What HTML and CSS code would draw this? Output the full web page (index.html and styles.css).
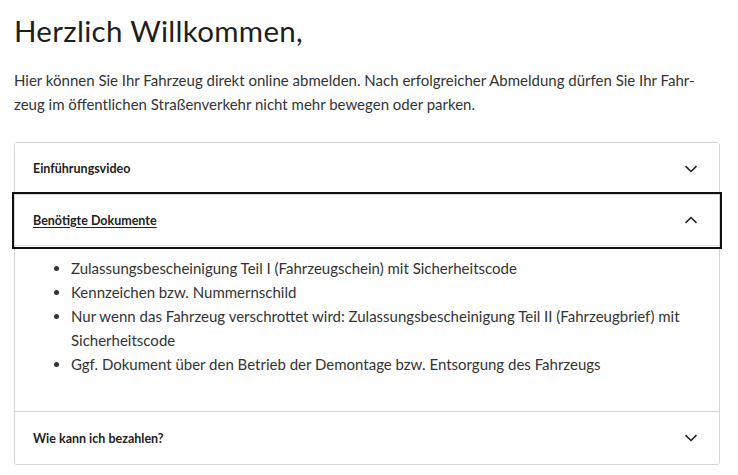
FILE: index.html
```html
<!DOCTYPE html>
<html lang="de">
<head>
<meta charset="utf-8">
<link rel="stylesheet" href="styles.css">
</head>
<body>
<main class="page">
  <h1 class="title">Herzlich Willkommen,</h1>
  <p class="intro">Hier können Sie Ihr Fahrzeug direkt online abmelden. Nach erfolgreicher Abmeldung dürfen Sie Ihr Fahr-<br>zeug im öffentlichen Straßenverkehr nicht mehr bewegen oder parken.</p>
  <div class="accordion">
    <div class="item">
      <button class="head">
        <span class="head-label">Einführungsvideo</span>
        <svg class="chev" width="14" height="8" viewBox="0 0 14 8"><path d="M1.5 1.2 L7 6.5 L12.5 1.2" fill="none" stroke="#222" stroke-width="1.6"/></svg>
      </button>
    </div>
    <div class="item open">
      <button class="head focused">
        <span class="head-label">Benötigte Dokumente</span>
        <svg class="chev" width="14" height="8" viewBox="0 0 14 8"><path d="M1.5 6.8 L7 1.5 L12.5 6.8" fill="none" stroke="#222" stroke-width="1.6"/></svg>
      </button>
      <div class="panel">
        <ul class="docs">
          <li>Zulassungsbescheinigung Teil I (Fahrzeugschein) mit Sicherheitscode</li>
          <li>Kennzeichen bzw. Nummernschild</li>
          <li>Nur wenn das Fahrzeug verschrottet wird: Zulassungsbescheinigung Teil II (Fahrzeugbrief) mit Sicherheitscode</li>
          <li>Ggf. Dokument über den Betrieb der Demontage bzw. Entsorgung des Fahrzeugs</li>
        </ul>
      </div>
    </div>
    <div class="item">
      <button class="head last">
        <span class="head-label">Wie kann ich bezahlen?</span>
        <svg class="chev" width="14" height="8" viewBox="0 0 14 8"><path d="M1.5 1.2 L7 6.5 L12.5 1.2" fill="none" stroke="#222" stroke-width="1.6"/></svg>
      </button>
    </div>
  </div>
</main>
</body>
</html>
```
FILE: styles.css
```css
html, body {
  margin: 0;
  padding: 0;
  background: #fff;
}
body {
  font-family: Lato, "Noto Sans", sans-serif;
  color: #333;
}
.page {
  padding: 12px 18px 0 14px;
}
.title {
  margin: 0;
  font-family: Lato, "Noto Sans", sans-serif;
  font-weight: 400;
  font-size: 29.5px;
  line-height: 38px;
  color: #1e1e1e;
  letter-spacing: 0.3px;
}
.intro {
  margin: 18px 0 0;
  font-size: 15px;
  line-height: 24px;
  color: #333;
}
.accordion {
  margin-top: 26px;
  border: 1px solid #d6d6d6;
  border-radius: 3px;
}
.item + .item {
  border-top: 1px solid #d6d6d6;
}
.head {
  display: flex;
  align-items: center;
  justify-content: space-between;
  width: 100%;
  height: 51px;
  padding: 0 21px 0 18px;
  margin: 0;
  border: 0;
  background: #fff;
  font-family: Lato, "Noto Sans", sans-serif;
  font-weight: 700;
  font-size: 12.5px;
  color: #222;
  text-align: left;
  box-sizing: border-box;
}
.head.last {
  height: 52px;
  border-radius: 0 0 3px 3px;
}
.head.focused {
  outline: 2px solid #111;
  outline-offset: 1px;
  position: relative;
}
.head.focused .head-label {
  text-decoration: underline;
  text-underline-offset: 2px;
}
.chev {
  display: block;
}
.open .head {
  border-bottom: 1px solid #e2e2e2;
}
.panel {
  padding: 10px 18px 35px;
}
.docs {
  margin: 0;
  padding-left: 38px;
  font-size: 15px;
  line-height: 24px;
  color: #333;
}
```
